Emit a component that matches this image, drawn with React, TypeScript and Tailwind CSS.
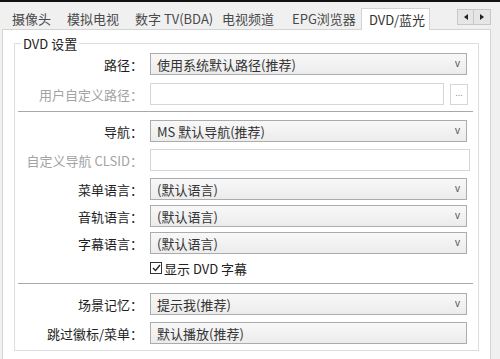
const tabs = [
  { label: "摄像头", w: "w-[55px]" },
  { label: "模拟电视", w: "w-[68px]" },
  { label: "数字 TV(BDA)", w: "w-[87px]" },
  { label: "电视频道", w: "w-[70px]" },
  { label: "EPG浏览器", w: "w-[76px]" },
];

function Label({ text, disabled }: { text: string; disabled?: boolean }) {
  return (
    <div className={`w-[131px] shrink-0 text-right pr-[3px] ${disabled ? "text-[#a3a3a3]" : "text-[#1e1e1e]"}`}>
      {text}
    </div>
  );
}

function Combo({ value, arrow = true }: { value: string; arrow?: boolean }) {
  return (
    <div className="ml-[4px] mr-[11px] flex-1 h-[22px] flex items-center justify-between border border-[#acacac] bg-gradient-to-b from-[#f8f8f8] to-[#ececec] pl-[6px] pr-[6px] text-[#333]">
      <span>{value}</span>
      {arrow && <span className="text-[10px] text-[#555] font-['Liberation_Sans',sans-serif]">v</span>}
    </div>
  );
}

function TextBox({ className = "" }: { className?: string }) {
  return <div className={`ml-[4px] h-[22px] border border-[#d6d6d6] bg-white ${className}`} />;
}

function Row({ children, className = "" }: { children: React.ReactNode; className?: string }) {
  return <div className={`flex items-center ${className}`}>{children}</div>;
}

export default function App() {
  return (
    <div className="w-[500px] h-[359px] overflow-hidden bg-[#f0f0f0] text-[13px] leading-none font-['Noto_Sans_CJK_SC',sans-serif]">
      <div className="h-[2px] bg-[#111]" />
      <div className="h-[27px] flex items-end pl-[4px] relative">
        {tabs.map((t) => (
          <div key={t.label} className={`${t.w} h-[21px] pl-[8px] flex items-center text-[#4a4a4a] whitespace-nowrap`}>
            {t.label}
          </div>
        ))}
        <div className="ml-[1px] w-[69px] h-[22px] -mb-px pl-[7px] flex items-center bg-white border border-b-0 border-[#d4d4d4] text-[#333] relative z-10">
          DVD/蓝光
        </div>
        <div className="absolute left-[457px] top-[7px] flex">
          <div className="w-[17px] h-[16px] border border-[#c8c8c8] bg-[#e6e6e6] flex items-center justify-center">
            <svg width="4" height="6" viewBox="0 0 4 6"><path d="M4 0L0 3l4 3z" fill="#222" /></svg>
          </div>
          <div className="w-[17px] h-[16px] border border-l-0 border-[#c8c8c8] bg-[#e6e6e6] flex items-center justify-center">
            <svg width="4" height="6" viewBox="0 0 4 6"><path d="M0 0l4 3-4 3z" fill="#222" /></svg>
          </div>
        </div>
      </div>
      <div className="ml-[2px] w-[489px] h-[340px] border border-[#d4d4d4] bg-white pt-[13px] px-[11px]">
        <div className="relative border border-[#dedede] h-[308px] pt-[9px]">
          <div className="absolute left-[6px] -top-[7px] bg-white px-[2px] text-[#222]">DVD 设置</div>
          <Row>
            <Label text="路径：" />
            <Combo value="使用系统默认路径(推荐)" />
          </Row>
          <Row className="mt-[8px]">
            <Label text="用户自定义路径：" disabled />
            <TextBox className="w-[294px]" />
            <div className="ml-[6px] w-[18px] h-[21px] border border-[#d6d6d6] bg-white flex items-end justify-center pb-[6px] text-[9px] text-[#888] font-['Liberation_Sans',sans-serif]">
              ...
            </div>
          </Row>
          <div className="mt-[6px] ml-[3px] mr-[5px] border-t border-[#a8a8a8]" />
          <Row className="mt-[8px]">
            <Label text="导航：" />
            <Combo value="MS 默认导航(推荐)" />
          </Row>
          <Row className="mt-[7px]">
            <Label text="自定义导航 CLSID：" disabled />
            <TextBox className="flex-1 mr-[8px]" />
          </Row>
          <Row className="mt-[7px]">
            <Label text="菜单语言：" />
            <Combo value="(默认语言)" />
          </Row>
          <Row className="mt-[5px]">
            <Label text="音轨语言：" />
            <Combo value="(默认语言)" />
          </Row>
          <Row className="mt-[5px]">
            <Label text="字幕语言：" />
            <Combo value="(默认语言)" />
          </Row>
          <div className="mt-[7px] ml-[135px] flex items-center h-[14px] text-[#222]">
            <div className="w-[12px] h-[12px] border border-[#333] bg-white flex items-center justify-center mr-[2px]">
              <svg width="9" height="8" viewBox="0 0 9 8"><path d="M1 4l2.5 2.5L8 1" stroke="#222" strokeWidth="1.3" fill="none" /></svg>
            </div>
            显示 DVD 字幕
          </div>
          <div className="mt-[8px] ml-[3px] mr-[5px] border-t border-[#a8a8a8]" />
          <Row className="mt-[9px]">
            <Label text="场景记忆：" />
            <Combo value="提示我(推荐)" />
          </Row>
          <Row className="mt-[7px]">
            <Label text="跳过徽标/菜单：" />
            <Combo value="默认播放(推荐)" arrow={false} />
          </Row>
        </div>
      </div>
    </div>
  );
}
